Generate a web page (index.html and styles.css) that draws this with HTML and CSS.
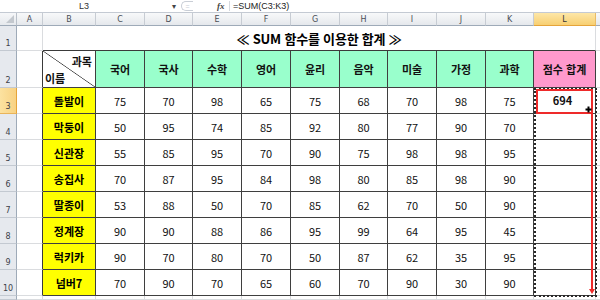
FILE: index.html
```html
<!DOCTYPE html>
<html lang="ko">
<head>
<meta charset="utf-8">
<title>SUM 함수를 이용한 합계</title>
<link rel="stylesheet" href="styles.css">
</head>
<body>
<div class="app">
  <div class="fbar">
    <div class="namebox">L3</div>
    <div class="dd">▾</div>
    <div class="btns"><span class="pill">=</span></div>
    <div class="fx">fx</div>
    <div class="formula">=SUM(C3:K3)</div>
  </div>
  <div class="sheet">
    <!-- column header row -->
    <div class="corner"><span class="tri"></span></div>
    <div class="ch">A</div><div class="ch">B</div><div class="ch">C</div><div class="ch">D</div><div class="ch">E</div><div class="ch">F</div><div class="ch">G</div><div class="ch">H</div><div class="ch">I</div><div class="ch">J</div><div class="ch">K</div><div class="ch ch-sel">L</div><div class="ch ch-last"></div>

    <!-- row 1 -->
    <div class="rh">1</div><div class="c"></div>
    <div class="c title">≪ SUM 함수를 이용한 합계 ≫</div>
    <div class="c m"></div>

    <!-- row 2 -->
    <div class="rh">2</div><div class="c edge"></div>
    <div class="c t diag"><span class="subj">과목</span><span class="who">이름</span></div>
    <div class="c t hd">국어</div><div class="c t hd">국사</div><div class="c t hd">수학</div><div class="c t hd">영어</div><div class="c t hd">윤리</div><div class="c t hd">음악</div><div class="c t hd">미술</div><div class="c t hd">가정</div><div class="c t hd">과학</div>
    <div class="c t total">점수 합계</div>
    <div class="c m"></div>

    <!-- row 3 -->
    <div class="rh rh-sel">3</div><div class="c edge"></div>
    <div class="c t nm">돌발이</div>
    <div class="c t">75</div><div class="c t">70</div><div class="c t">98</div><div class="c t">65</div><div class="c t">75</div><div class="c t">68</div><div class="c t">70</div><div class="c t">98</div><div class="c t">75</div>
    <div class="c t active">
      <span class="val">694</span>
      <div class="marquee"></div>
      <div class="redbox"></div>
      <div class="redline"></div>
      <div class="arrowhead"></div>
      <svg class="cross" width="7" height="7" viewBox="0 0 7 7"><path d="M3.5 0.5V6.5M0.5 3.5H6.5" stroke="#000" stroke-width="2"/></svg>
    </div>
    <div class="c m"></div>

    <!-- row 4 -->
    <div class="rh">4</div><div class="c edge"></div>
    <div class="c t nm">막둥이</div>
    <div class="c t">50</div><div class="c t">95</div><div class="c t">74</div><div class="c t">85</div><div class="c t">92</div><div class="c t">80</div><div class="c t">77</div><div class="c t">90</div><div class="c t">70</div>
    <div class="c t"></div>
    <div class="c m"></div>

    <!-- row 5 -->
    <div class="rh">5</div><div class="c edge"></div>
    <div class="c t nm">신관장</div>
    <div class="c t">55</div><div class="c t">85</div><div class="c t">95</div><div class="c t">70</div><div class="c t">90</div><div class="c t">75</div><div class="c t">98</div><div class="c t">98</div><div class="c t">95</div>
    <div class="c t"></div>
    <div class="c m"></div>

    <!-- row 6 -->
    <div class="rh">6</div><div class="c edge"></div>
    <div class="c t nm">송집사</div>
    <div class="c t">70</div><div class="c t">87</div><div class="c t">95</div><div class="c t">84</div><div class="c t">98</div><div class="c t">80</div><div class="c t">85</div><div class="c t">98</div><div class="c t">90</div>
    <div class="c t"></div>
    <div class="c m"></div>

    <!-- row 7 -->
    <div class="rh">7</div><div class="c edge"></div>
    <div class="c t nm">딸종이</div>
    <div class="c t">53</div><div class="c t">88</div><div class="c t">50</div><div class="c t">70</div><div class="c t">85</div><div class="c t">62</div><div class="c t">70</div><div class="c t">50</div><div class="c t">90</div>
    <div class="c t"></div>
    <div class="c m"></div>

    <!-- row 8 -->
    <div class="rh">8</div><div class="c edge"></div>
    <div class="c t nm">정계장</div>
    <div class="c t">90</div><div class="c t">90</div><div class="c t">88</div><div class="c t">86</div><div class="c t">95</div><div class="c t">99</div><div class="c t">64</div><div class="c t">95</div><div class="c t">45</div>
    <div class="c t"></div>
    <div class="c m"></div>

    <!-- row 9 -->
    <div class="rh">9</div><div class="c edge"></div>
    <div class="c t nm">럭키카</div>
    <div class="c t">90</div><div class="c t">70</div><div class="c t">80</div><div class="c t">70</div><div class="c t">50</div><div class="c t">87</div><div class="c t">62</div><div class="c t">35</div><div class="c t">95</div>
    <div class="c t"></div>
    <div class="c m"></div>

    <!-- row 10 -->
    <div class="rh">10</div><div class="c edge"></div>
    <div class="c t nm">넘버7</div>
    <div class="c t">70</div><div class="c t">90</div><div class="c t">70</div><div class="c t">65</div><div class="c t">60</div><div class="c t">70</div><div class="c t">90</div><div class="c t">30</div><div class="c t">90</div>
    <div class="c t"></div>
    <div class="c m"></div>

    <!-- row 11 (only its top edge is visible) -->
    <div class="rh"></div><div class="c"></div>
    <div class="c"></div><div class="c"></div><div class="c"></div><div class="c"></div><div class="c"></div><div class="c"></div><div class="c"></div><div class="c"></div><div class="c"></div><div class="c"></div><div class="c"></div>
    <div class="c m"></div>
  </div>
</div>
</body>
</html>
```
FILE: styles.css
```css
html, body {
  margin: 0;
  padding: 0;
  background: #fff;
}
body {
  width: 600px;
  height: 300px;
  overflow: hidden;
  font-family: "Noto Sans CJK KR", "Noto Sans", sans-serif;
}
.app {
  width: 600px;
  height: 300px;
  display: flex;
  flex-direction: column;
}

/* formula bar */
.fbar {
  height: 12px;
  flex: none;
  display: flex;
  align-items: center;
  border-bottom: 1px solid #c4cad3;
  font-family: "Liberation Sans", "Noto Sans", sans-serif;
  font-size: 9px;
  color: #333;
}
.namebox {
  width: 168px;
  text-align: center;
}
.dd {
  width: 11px;
  font-size: 8px;
  color: #444;
  text-align: center;
}
.btns {
  width: 38px;
  display: flex;
  align-items: center;
}
.pill {
  width: 12px;
  height: 10px;
  margin-left: 2px;
  border: 1px solid #c9ced6;
  border-right: none;
  border-radius: 6px 0 0 6px;
  font-size: 7px;
  line-height: 10px;
  color: #c9ced6;
  text-align: center;
  box-sizing: border-box;
}
.fx {
  width: 10px;
  font-family: "Liberation Serif", serif;
  font-style: italic;
  font-weight: bold;
  font-size: 9px;
  color: #444;
  border-right: 1px solid #d5d9df;
  padding-right: 2px;
  margin-right: 3px;
  line-height: 10px;
}
.formula {
  color: #222;
}

/* sheet grid */
.sheet {
  flex: 1;
  display: grid;
  grid-template-columns: 17px 26px 53px 49px 48px 49px 49px 49px 48px 49px 49px 48px 62px 1fr;
  grid-template-rows: 13px 25px 37px repeat(8, 26px) 1fr;
  overflow: hidden;
}
.sheet > div {
  box-sizing: border-box;
  min-width: 0;
  min-height: 0;
}

.corner {
  background: linear-gradient(#f6f7f9, #e6e9ed);
  border-right: 1px solid #b9c0c9;
  border-bottom: 1px solid #9eaab8;
  position: relative;
}
.tri {
  position: absolute;
  right: 2px;
  bottom: 2px;
  width: 0;
  height: 0;
  border-left: 8px solid transparent;
  border-bottom: 8px solid #c3c8ce;
}
.ch {
  background: linear-gradient(#f8f9fa, #e5e8ec);
  border-right: 1px solid #c7ccd3;
  border-bottom: 1px solid #9eaab8;
  font-family: "DejaVu Sans", sans-serif;
  font-size: 8px;
  color: #4a4f57;
  display: flex;
  align-items: center;
  justify-content: center;
}
.ch-sel {
  background: linear-gradient(#fde7a8, #f7cf72);
  border-bottom: 1px solid #e5a43a;
  border-right: 1px solid #e9bb67;
  color: #333;
}
.ch-last {
  border-right: none;
}
.rh {
  background: #e6e9ee;
  border-right: 1px solid #9eaab8;
  border-bottom: 1px solid #c3c9d1;
  font-family: "DejaVu Sans", sans-serif;
  font-size: 8px;
  color: #3c4149;
  display: flex;
  align-items: flex-end;
  justify-content: center;
  padding-bottom: 2px;
}
.rh-sel {
  background: linear-gradient(90deg, #fce2a0, #f8d283);
  border-bottom: 1px solid #e9b45a;
  border-right: 1px solid #e5a43a;
}

/* cells */
.c {
  border-right: 1px solid #dadcdf;
  border-bottom: 1px solid #dadcdf;
  display: flex;
  align-items: center;
  justify-content: center;
  font-size: 11px;
  color: #111;
  white-space: nowrap;
}
.c.m {
  border-right: none;
}
.c.edge {
  border-right-color: #3a3a3a;
}
.c.t {
  border-right-color: #3f3f3f;
  border-bottom-color: #3f3f3f;
}
.title {
  grid-column: span 11;
  border-bottom-color: #3a3a3a !important;
  font-size: 13px;
  font-weight: bold;
  color: #000;
  letter-spacing: -0.2px;
}
.hd {
  background: #99ffcc;
  font-weight: bold;
  color: #111;
}
.total {
  background: #ff99cc;
  font-weight: bold;
  color: #111;
}
.nm {
  background: #ffff00;
  font-weight: bold;
  color: #000;
}
.diag {
  background: linear-gradient(to top right, #fff calc(50% - 0.7px), #444 50%, #fff calc(50% + 0.7px));
  flex-direction: column;
  align-items: stretch;
  justify-content: space-between;
  padding: 4px 3px 2px 2px;
  font-weight: bold;
  font-size: 11px;
  line-height: 13px;
}
.subj {
  align-self: flex-end;
}
.who {
  align-self: flex-start;
}

/* active cell / selection overlays */
.active {
  position: relative;
  font-weight: bold;
}
.val {
  position: relative;
  left: -2px;
  top: -1px;
}
.marquee {
  position: absolute;
  left: 0;
  top: 0;
  width: 63px;
  height: 209px;
  border: 2px dotted #2a2a2a;
  box-sizing: border-box;
}
.redbox {
  position: absolute;
  left: 2px;
  top: 1px;
  width: 57px;
  height: 25px;
  border: 2px solid #ee2a2a;
  box-sizing: border-box;
}
.redline {
  position: absolute;
  left: 57px;
  top: 26px;
  width: 2px;
  height: 176px;
  background: #ee2a2a;
}
.arrowhead {
  position: absolute;
  left: 55px;
  top: 201px;
  width: 0;
  height: 0;
  border-left: 3px solid transparent;
  border-right: 3px solid transparent;
  border-top: 5px solid #ee2a2a;
}
.cross {
  position: absolute;
  left: 51px;
  top: 18px;
}
```
